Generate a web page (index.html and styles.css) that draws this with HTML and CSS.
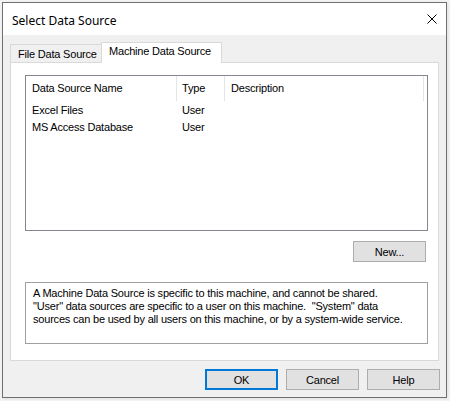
FILE: index.html
```html
<!DOCTYPE html>
<html>
  <head>
    <title>Select Data Source</title>
    <link rel="stylesheet" href="styles.css">
  </head>
  <body>
    <div class="window">
      <div class="titlebar">
        <span class="title">Select Data Source</span>
        <svg class="close" width="10" height="10" viewBox="0 0 10 10">
          <path d="M0.5 0.5 L9.5 9.5 M9.5 0.5 L0.5 9.5" stroke="#000" stroke-width="1" fill="none" />
        </svg>
      </div>

      <div class="content">
        <div class="tabs">
          <div class="tab">File Data Source</div>
          <div class="tab active">Machine Data Source</div>
        </div>

        <div class="panel">
          <div class="list">
            <div class="list-head">
              <div class="col">Data Source Name</div>
              <div class="col">Type</div>
              <div class="col">Description</div>
            </div>
            <div class="row">
              <div class="cell">Excel Files</div>
              <div class="cell">User</div>
              <div class="cell"></div>
            </div>
            <div class="row">
              <div class="cell">MS Access Database</div>
              <div class="cell">User</div>
              <div class="cell"></div>
            </div>
          </div>

          <div class="new-row">
            <button class="btn">New...</button>
          </div>

          <div class="info">
            A Machine Data Source is specific to this machine, and cannot be shared.<br>
            "User" data sources are specific to a user on this machine.&nbsp; "System" data<br>
            sources can be used by all users on this machine, or by a system-wide service.
          </div>
        </div>

        <div class="actions">
          <button class="btn default">OK</button>
          <button class="btn">Cancel</button>
          <button class="btn">Help</button>
        </div>
      </div>
    </div>
  </body>
</html>
```

FILE: styles.css
```css
* {
  box-sizing: border-box;
}
body {
  margin: 0;
  padding: 2px;
  background-color: #f3f3f3;
  font-family: "Liberation Sans", Arial, sans-serif;
  font-size: 11px;
  letter-spacing: -0.2px;
  color: #000;
}
.window {
  width: 445px;
  height: 396px;
  border: 1px solid #707070;
  background-color: #f0f0f0;
  display: flex;
  flex-direction: column;
  box-shadow: 1px 1px 3px rgba(0, 0, 0, 0.08);
}
.titlebar {
  height: 32px;
  background: white;
  display: flex;
  align-items: center;
  justify-content: space-between;
  padding: 2px 9px 0 9px;
}
.title {
  font-family: "Noto Sans", sans-serif;
  font-size: 12px;
  letter-spacing: 0;
}
.close {
  display: block;
  margin-top: -2px;
}
.content {
  flex: 1;
  padding: 7px 6px 7px 7px;
  display: flex;
  flex-direction: column;
}
.tabs {
  display: flex;
  height: 20px;
  align-items: flex-end;
}
.tab {
  height: 18px;
  padding: 0 0 0 7px;
  width: 92px;
  border: 1px solid #d9d9d9;
  border-bottom: none;
  background: #f0f0f0;
  line-height: 18px;
  white-space: nowrap;
}
.tab.active {
  position: relative;
  z-index: 1;
  height: 21px;
  width: 121px;
  margin-left: -1px;
  margin-bottom: -1px;
  padding-left: 7px;
  background: white;
  line-height: 17px;
}
.panel {
  width: 429px;
  height: 299px;
  border: 1px solid #d9d9d9;
  background: white;
  padding: 12px 10px 15px 14px;
  display: flex;
  flex-direction: column;
}
.list {
  width: 403px;
  height: 156px;
  border: 1px solid #828790;
}
.list-head,
.row {
  display: grid;
  grid-template-columns: 151px 48px 199px;
}
.list-head {
  height: 26px;
}
.col {
  height: 25px;
  border-right: 1px solid #e5e5e5;
  padding-left: 6px;
  line-height: 25px;
  white-space: nowrap;
}
.list-head .col:nth-child(2) {
  padding-left: 5px;
}
.row {
  height: 17px;
  line-height: 17px;
}
.cell {
  padding-left: 6px;
  white-space: nowrap;
}
.row .cell:nth-child(2) {
  padding-left: 5px;
}
.new-row {
  display: flex;
  justify-content: flex-end;
  margin-top: 10px;
  padding-right: 2px;
}
.btn {
  width: 73px;
  height: 21px;
  padding: 0;
  border: 1px solid #adadad;
  background-color: #e1e1e1;
  font-family: "Liberation Sans", Arial, sans-serif;
  font-size: 11px;
  letter-spacing: -0.2px;
  color: #000;
}
.btn.default {
  border: 2px solid #0078d7;
}
.info {
  margin-top: 20px;
  width: 403px;
  height: 62px;
  border: 1px solid #a0a0a0;
  padding: 4px 0 0 7px;
  line-height: 13px;
  white-space: nowrap;
}
.actions {
  display: flex;
  justify-content: flex-end;
  gap: 8px;
  margin-top: 8px;
}
```
